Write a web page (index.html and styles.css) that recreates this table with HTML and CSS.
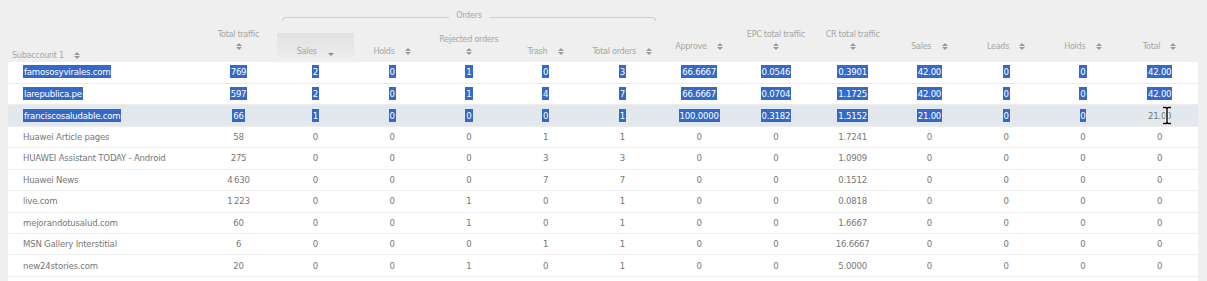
FILE: index.html
```html
<!DOCTYPE html>
<html lang="en">

  <head>
    <meta charset="UTF-8">
    <meta name="viewport" content="width=device-width, initial-scale=1.0">
    <title>Statistics - Subaccounts</title>
    <link rel="stylesheet" href="styles.css">
  </head>

  <body>

    <table class="report">
      <colgroup>
        <col class="col-name">
        <col class="col-traffic">
        <col span="12">
      </colgroup>
      <thead>
        <tr class="head-top">
          <th rowspan="2" class="name-head">Subaccount 1 <span class="sort"></span></th>
          <th rowspan="2">Total traffic<br><span class="sort"></span></th>
          <th colspan="5" class="group-head"><div class="bracket"><span>Orders</span></div></th>
          <th rowspan="2">Approve <span class="sort"></span></th>
          <th rowspan="2">EPC total traffic<br><span class="sort"></span></th>
          <th rowspan="2">CR total traffic<br><span class="sort"></span></th>
          <th rowspan="2">Sales <span class="sort"></span></th>
          <th rowspan="2">Leads <span class="sort"></span></th>
          <th rowspan="2">Holds <span class="sort"></span></th>
          <th rowspan="2">Total <span class="sort"></span></th>
        </tr>
        <tr class="head-sub">
          <th class="sorted">Sales <span class="sort-desc"></span></th>
          <th>Holds <span class="sort"></span></th>
          <th>Rejected orders<br><span class="sort"></span></th>
          <th>Trash <span class="sort"></span></th>
          <th>Total orders <span class="sort"></span></th>
        </tr>
      </thead>
      <tbody>
        <tr>
          <td><span class="sel">famososyvirales.com</span></td>
          <td><span class="sel">769</span></td>
          <td><span class="sel">2</span></td>
          <td><span class="sel">0</span></td>
          <td><span class="sel">1</span></td>
          <td><span class="sel">0</span></td>
          <td><span class="sel">3</span></td>
          <td><span class="sel">66.6667</span></td>
          <td><span class="sel">0.0546</span></td>
          <td><span class="sel">0.3901</span></td>
          <td><span class="sel">42.00</span></td>
          <td><span class="sel">0</span></td>
          <td><span class="sel">0</span></td>
          <td><span class="sel">42.00</span></td>
        </tr>
        <tr>
          <td><span class="sel">larepublica.pe</span></td>
          <td><span class="sel">597</span></td>
          <td><span class="sel">2</span></td>
          <td><span class="sel">0</span></td>
          <td><span class="sel">1</span></td>
          <td><span class="sel">4</span></td>
          <td><span class="sel">7</span></td>
          <td><span class="sel">66.6667</span></td>
          <td><span class="sel">0.0704</span></td>
          <td><span class="sel">1.1725</span></td>
          <td><span class="sel">42.00</span></td>
          <td><span class="sel">0</span></td>
          <td><span class="sel">0</span></td>
          <td><span class="sel">42.00</span></td>
        </tr>
        <tr class="hover">
          <td><span class="sel">franciscosaludable.com</span></td>
          <td><span class="sel">66</span></td>
          <td><span class="sel">1</span></td>
          <td><span class="sel">0</span></td>
          <td><span class="sel">0</span></td>
          <td><span class="sel">0</span></td>
          <td><span class="sel">1</span></td>
          <td><span class="sel">100.0000</span></td>
          <td><span class="sel">0.3182</span></td>
          <td><span class="sel">1.5152</span></td>
          <td><span class="sel">21.00</span></td>
          <td><span class="sel">0</span></td>
          <td><span class="sel sel-part">0</span></td>
          <td class="cursor-cell">21.00
            <svg class="ibeam" width="10" height="19" viewBox="0 0 10 19">
              <path d="M1 1.5h3l1 1 1-1h3M5 2.5v14M1 17.5h3l1-1 1 1h3" fill="none" stroke="#fff" stroke-width="3" />
              <path d="M1 1.5h3l1 1 1-1h3M5 2.5v14M1 17.5h3l1-1 1 1h3" fill="none" stroke="#000" stroke-width="1.4" />
            </svg>
          </td>
        </tr>
        <tr>
          <td>Huawei Article pages</td>
          <td>58</td><td>0</td><td>0</td><td>0</td><td>1</td><td>1</td>
          <td>0</td><td>0</td><td>1.7241</td><td>0</td><td>0</td><td>0</td><td>0</td>
        </tr>
        <tr>
          <td>HUAWEI Assistant TODAY - Android</td>
          <td>275</td><td>0</td><td>0</td><td>0</td><td>3</td><td>3</td>
          <td>0</td><td>0</td><td>1.0909</td><td>0</td><td>0</td><td>0</td><td>0</td>
        </tr>
        <tr>
          <td>Huawei News</td>
          <td>4&thinsp;630</td><td>0</td><td>0</td><td>0</td><td>7</td><td>7</td>
          <td>0</td><td>0</td><td>0.1512</td><td>0</td><td>0</td><td>0</td><td>0</td>
        </tr>
        <tr>
          <td>live.com</td>
          <td>1&thinsp;223</td><td>0</td><td>0</td><td>1</td><td>0</td><td>1</td>
          <td>0</td><td>0</td><td>0.0818</td><td>0</td><td>0</td><td>0</td><td>0</td>
        </tr>
        <tr>
          <td>mejorandotusalud.com</td>
          <td>60</td><td>0</td><td>0</td><td>1</td><td>0</td><td>1</td>
          <td>0</td><td>0</td><td>1.6667</td><td>0</td><td>0</td><td>0</td><td>0</td>
        </tr>
        <tr>
          <td>MSN Gallery Interstitial</td>
          <td>6</td><td>0</td><td>0</td><td>0</td><td>1</td><td>1</td>
          <td>0</td><td>0</td><td>16.6667</td><td>0</td><td>0</td><td>0</td><td>0</td>
        </tr>
        <tr>
          <td>new24stories.com</td>
          <td>20</td><td>0</td><td>0</td><td>1</td><td>0</td><td>1</td>
          <td>0</td><td>0</td><td>5.0000</td><td>0</td><td>0</td><td>0</td><td>0</td>
        </tr>
      </tbody>
      <tfoot>
        <tr class="foot-gap">
          <td colspan="14"></td>
        </tr>
      </tfoot>
    </table>

  </body>

</html>
```

FILE: styles.css
```css
body {
  font-family: 'DejaVu Sans Condensed', 'DejaVu Sans', sans-serif;
  font-stretch: condensed;
  background-color: #efefef;
  margin: 0 8px;
  padding: 0;
}

.report {
  width: 1190px;
  table-layout: fixed;
  border-collapse: collapse;
}

.report th,
.report td {
  box-sizing: border-box;
}

.col-name {
  width: 192px;
}

.col-traffic {
  width: 77px;
}

/* header */

.report th {
  font-weight: normal;
  font-size: 9px;
  letter-spacing: -0.3px;
  line-height: 12px;
  color: #a6a6a6;
  text-align: center;
  padding: 0;
}

.head-top th {
  height: 33px;
  vertical-align: bottom;
  padding-bottom: 10px;
}

.head-top th.name-head {
  text-align: left;
  padding-left: 4px;
  padding-bottom: 1px;
}

.head-top th.group-head {
  vertical-align: top;
  padding: 8px 5px 0;
}

.bracket {
  display: flex;
  align-items: flex-start;
  line-height: 14px;
}

.bracket::before,
.bracket::after {
  content: "";
  flex: 1;
  height: 3px;
  margin-top: 9px;
  border-top: 1px solid #cfcfcf;
}

.bracket::before {
  border-left: 1px solid #cfcfcf;
  border-top-left-radius: 4px;
}

.bracket::after {
  border-right: 1px solid #cfcfcf;
  border-top-right-radius: 4px;
}

.bracket span {
  padding: 0 7px;
}

.head-sub th {
  height: 29px;
  vertical-align: bottom;
  padding-bottom: 5px;
}

.head-sub th.sorted {
  background: linear-gradient(to bottom, #e2e2e2 0, #ebebeb 24px, transparent 24px);
}

.sort {
  display: inline-block;
  width: 6px;
  height: 7px;
  margin-left: 8px;
  vertical-align: middle;
}

.sort::before,
.sort::after {
  content: "";
  display: block;
  border-left: 3px solid transparent;
  border-right: 3px solid transparent;
}

.sort::before {
  border-bottom: 3px solid #9a9a9a;
}

.sort::after {
  margin-top: 1px;
  border-top: 3px solid #9a9a9a;
}

th br + .sort {
  margin-left: 0;
}

.sort-desc {
  display: inline-block;
  margin-left: 9px;
  vertical-align: -2px;
  border-left: 3px solid transparent;
  border-right: 3px solid transparent;
  border-top: 3px solid #8c8c8c;
}

/* body */

.report td {
  background-color: white;
  height: 21.45px;
  padding: 0;
  font-size: 9.5px;
  letter-spacing: -0.2px;
  line-height: 12px;
  color: #777;
  text-align: center;
  border-bottom: 1px solid #ececec;
  white-space: nowrap;
}

.report td:first-child {
  text-align: left;
  padding-left: 15px;
}

.report tr.hover td {
  background-color: #e3e8ee;
}

.report tr.foot-gap td {
  height: 12px;
  border-bottom: none;
}

.sel {
  background-color: #3469c9;
  color: white;
  padding: 1px 1px;
}

.sel-part {
  padding: 1px 0;
}

.cursor-cell {
  position: relative;
}

.ibeam {
  position: absolute;
  left: 41px;
  top: 1px;
}
```
